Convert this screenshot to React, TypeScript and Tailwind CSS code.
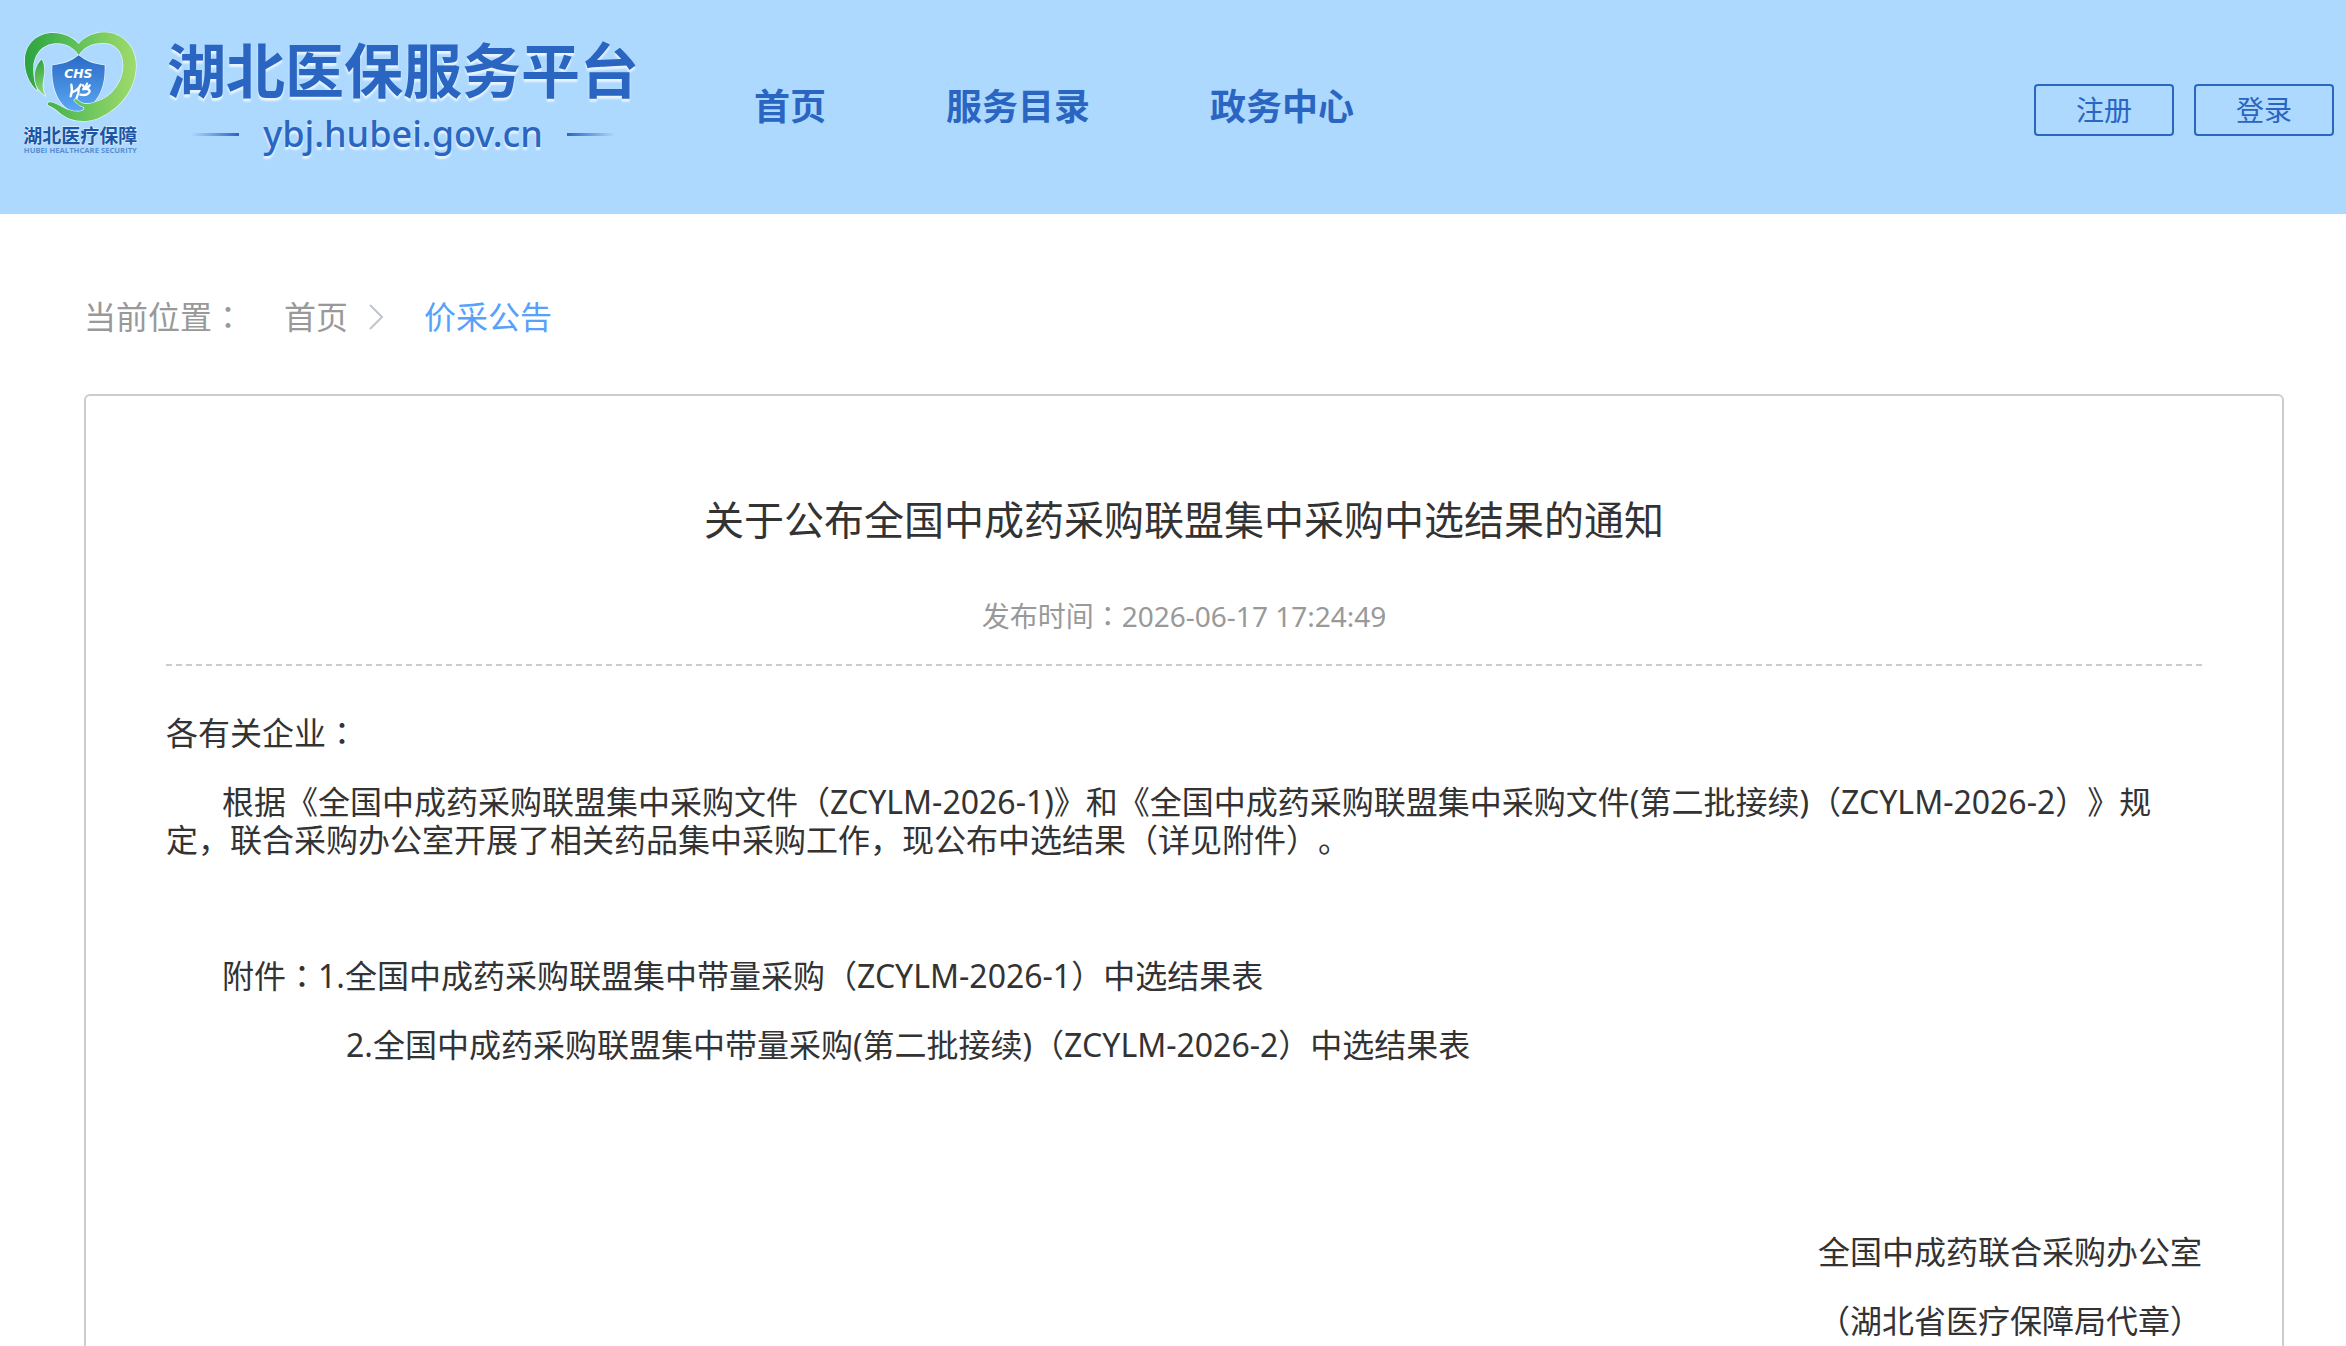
import React from "react";

const navItems = ["首页", "服务目录", "政务中心"];

// full-width colons sit in the middle of their cell
const centerColons = (text: string) =>
    text.split(/(：)/).map((part, i) =>
        i % 2 ? (
            <span key={i} className="font-['Noto_Sans_CJK_TC',sans-serif] leading-none">
                {part}
            </span>
        ) : (
            part
        )
    );

const Emblem: React.FC = () => (
    <svg
        viewBox="40 30 348 378"
        className="w-[116px] h-[126px] shrink-0"
        role="img"
        aria-label="湖北医疗保障"
    >
        <defs>
            <linearGradient id="heart" x1="45" y1="170" x2="380" y2="170" gradientUnits="userSpaceOnUse">
                <stop offset="0" stopColor="#2ba33f" />
                <stop offset="0.45" stopColor="#5fc05a" />
                <stop offset="1" stopColor="#a0db6c" />
            </linearGradient>
            <linearGradient id="shield" x1="0" y1="105" x2="0" y2="275" gradientUnits="userSpaceOnUse">
                <stop offset="0" stopColor="#2b6ac4" />
                <stop offset="1" stopColor="#5aa8f4" />
            </linearGradient>
            <linearGradient id="leaf" x1="70" y1="120" x2="105" y2="225" gradientUnits="userSpaceOnUse">
                <stop offset="0" stopColor="#2ba33f" />
                <stop offset="1" stopColor="#8fd873" />
            </linearGradient>
        </defs>
        <g stroke="#e4f3ff" strokeWidth="4" strokeLinejoin="round" paintOrder="stroke">
            <path
                fill="url(#heart)"
                d="M207 106C194 84 170 68 138 70C98 72 74 102 71 138C69 166 76 196 84 212C60 192 43 156 46 116C49 70 84 38 132 39C164 40 192 54 207 72C224 52 252 37 284 37C338 37 380 82 379 138C377 210 330 268 262 296C220 310 180 303 152 280C138 268 130 261 116 256C112 251 114 246 122 247C144 249 160 268 182 270C204 276 222 272 222 263C210 259 200 252 191 241C194 234 201 234 206 239C216 249 228 253 248 248C300 240 340 190 341 138C342 100 320 70 284 69C248 68 220 82 207 106Z"
            />
            <path fill="url(#leaf)" d="M96 118C78 136 71 164 78 190C83 208 96 220 108 228C96 210 98 192 102 172C106 150 104 132 96 118Z" />
            <path
                fill="url(#shield)"
                d="M207 106C186 124 160 133 128 136C126 176 132 222 158 252C166 262 174 267 182 269C204 276 222 272 222 263C210 259 200 252 191 241C194 234 201 234 206 239C216 249 232 253 254 245C280 216 286 176 285 136C254 133 228 124 207 106Z"
            />
        </g>
        <text x="206" y="175" textAnchor="middle" fontSize="37" fontWeight="700" fontStyle="italic" fill="#fff" fontFamily="DejaVu Sans, sans-serif">
            CHS
        </text>
        <g fill="none" stroke="#fff" strokeWidth="7" strokeLinecap="round">
            <path d="M185 194C188 206 187 218 183 229M189 216C199 213 208 204 213 194M207 206C208 216 205 226 201 233" />
            <path d="M220 196L223 201M232 191L229 199M240 196C234 205 226 207 218 208C234 204 244 209 238 218C233 225 222 226 212 224" />
        </g>
        <text x="212" y="368" textAnchor="middle" fontSize="57" fontWeight="700" fill="#1d55a5" stroke="#e4f3ff" strokeWidth="3" paintOrder="stroke" fontFamily="Noto Sans CJK SC, sans-serif">
            湖北医疗保障
        </text>
        <text x="212" y="399" textAnchor="middle" fontSize="23" fontWeight="700" fill="#5b8fd0" fontFamily="Open Sans, sans-serif">
            HUBEI HEALTHCARE SECURITY
        </text>
    </svg>
);

const Header: React.FC = () => (
    <header className="flex h-[214px] shrink-0 items-start bg-[#add9ff] pl-[23px] pr-3 text-[#2a65c1]">
        <a href="#" className="flex gap-7 pt-[30px]">
            <Emblem />
            <div className="flex flex-col items-center pt-0.5 [text-shadow:0_3px_2px_#e8f4ff]">
                <h1 className="text-[59px] leading-[76px] font-bold whitespace-nowrap">湖北医保服务平台</h1>
                <div className="flex items-center gap-6">
                    <span className="h-[3px] w-12 bg-linear-to-l from-[#2a65c1] to-transparent" />
                    <span className="text-[36px] leading-[52px] font-medium">ybj.hubei.gov.cn</span>
                    <span className="h-[3px] w-12 bg-linear-to-r from-[#2a65c1] to-transparent" />
                </div>
            </div>
        </a>
        <nav className="ml-[115px] flex gap-[120px] pt-[81px]">
            {navItems.map((item) => (
                <a key={item} href="#" className="text-[36px] leading-[52px] font-bold whitespace-nowrap">
                    {item}
                </a>
            ))}
        </nav>
        <div className="ml-auto flex gap-5 pt-[84px] text-[28px]">
            <button type="button" className="h-[52px] w-[140px] rounded border-2 border-[#2a65c1]">
                注册
            </button>
            <button type="button" className="h-[52px] w-[140px] rounded border-2 border-[#2a65c1]">
                登录
            </button>
        </div>
    </header>
);

const Breadcrumb: React.FC = () => (
    <nav className="flex items-center text-[32px] leading-[38px] text-[#999]">
        <span>{centerColons("当前位置：")}</span>
        <a href="#" className="ml-10">首页</a>
        <svg viewBox="0 0 16 28" className="mx-5 h-7 w-4" fill="none" stroke="#c0c4cc" strokeWidth="2">
            <path d="M2 2L14 14L2 26" />
        </svg>
        <a href="#" className="ml-5 text-[#58a1fb]">价采公告</a>
    </nav>
);

const App: React.FC = () => {
    return (
        <div className="flex h-screen flex-col overflow-hidden bg-white font-['Noto_Sans','Noto_Sans_CJK_SC',sans-serif] [text-spacing-trim:space-all]">
            <Header />
            <main className="pt-[84px] pr-[62px] pl-[84px]">
                <Breadcrumb />
                <article className="mt-[58px] rounded-md border-2 border-[#ccc] px-20 pt-[94px] pb-20 text-[#333]">
                    <h2 className="text-center text-[40px] leading-[60px]">
                        关于公布全国中成药采购联盟集中采购中选结果的通知
                    </h2>
                    <p className="mt-[46px] border-b-2 border-dashed border-[#ccc] pb-7 text-center text-[28px] leading-[40px] text-[#999]">
                        {centerColons("发布时间：2026-06-17 17:24:49")}
                    </p>
                    <div className="mt-12 flex flex-col gap-[31px] text-[32px] leading-[38px]">
                        <p>{centerColons("各有关企业：")}</p>
                        <p className="indent-14">
                            根据《全国中成药采购联盟集中采购文件（ZCYLM-2026-1)》和《全国中成药采购联盟集中采购文件(第二批接续)（ZCYLM-2026-2）》规定，联合采购办公室开展了相关药品集中采购工作，现公布中选结果（详见附件）。
                        </p>
                        <p className="mt-[67px] indent-14">
                            {centerColons("附件：1.全国中成药采购联盟集中带量采购（ZCYLM-2026-1）中选结果表")}
                        </p>
                        <p className="pl-[180px]">2.全国中成药采购联盟集中带量采购(第二批接续)（ZCYLM-2026-2）中选结果表</p>
                        <p className="mt-[138px] text-right">全国中成药联合采购办公室</p>
                        <p className="text-right">（湖北省医疗保障局代章）</p>
                    </div>
                </article>
            </main>
        </div>
    );
};

export default App;
